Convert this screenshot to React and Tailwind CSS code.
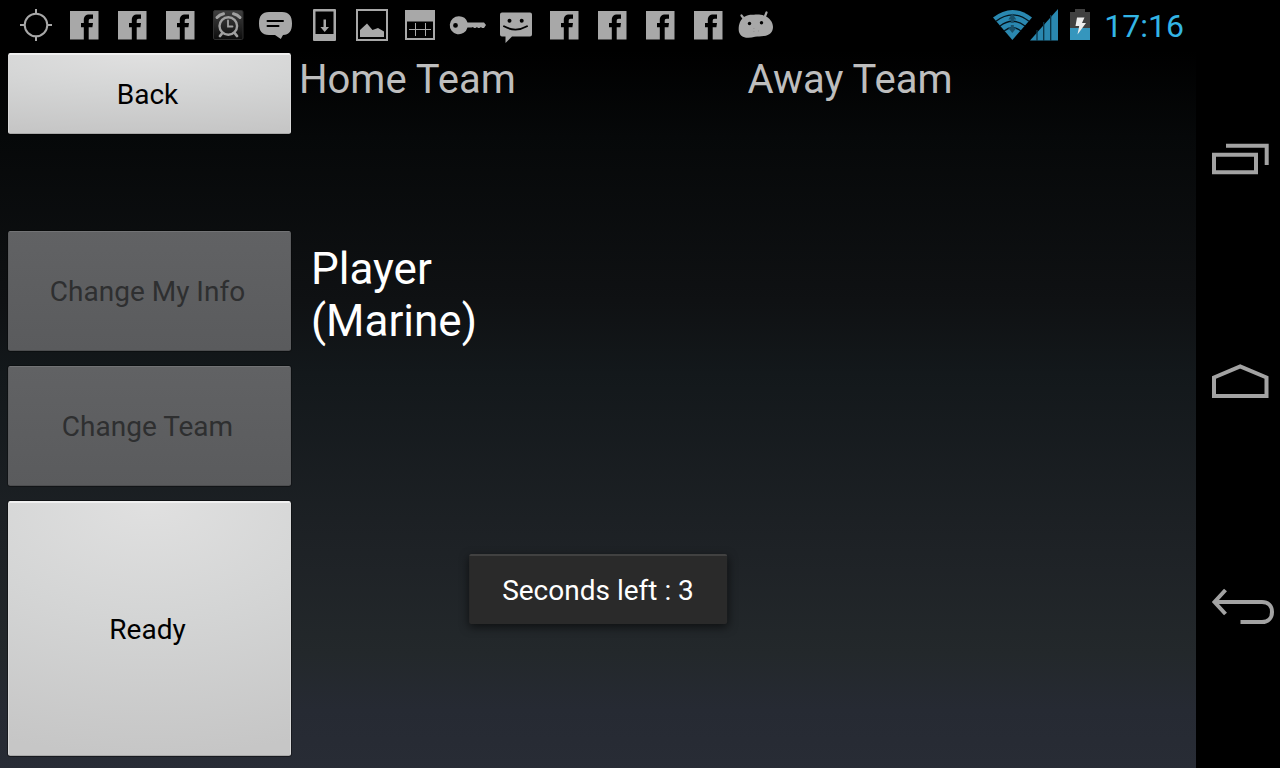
import React from 'react';

function Glyph({ label, children }) {
  return (
    <svg role="img" aria-label={label} viewBox="0 0 48 50" className="h-[50px] w-12 shrink-0" fill="#a8a8a8">
      {children}
    </svg>
  );
}

function LocationGlyph() {
  return (
    <Glyph label="Location">
      <g fill="none" stroke="#a8a8a8" strokeWidth="2">
        <circle cx="24" cy="25" r="11.3" />
        <path d="M24 9v5M24 36v5M8 25h5M35 25h5" />
      </g>
    </Glyph>
  );
}

function FacebookGlyph() {
  return (
    <Glyph label="Facebook">
      <path d="M10 11h28.5v28.5h-9.8V27.3h3.7l.6-4.3h-4.3v-2c0-1.4.6-2.2 2-2.2H33v-4.4h-3.6c-3.8 0-5.6 2-5.6 5.5V23H21v4.3h2.8v12.2H10z" />
    </Glyph>
  );
}

function AlarmGlyph() {
  return (
    <Glyph label="Alarm">
      <defs>
        <linearGradient id="alarm-tile" x1="0" y1="0" x2="0" y2="1">
          <stop offset="0" stopColor="#404040" />
          <stop offset="1" stopColor="#0c0c0c" />
        </linearGradient>
      </defs>
      <rect x="9.5" y="10.5" width="29.5" height="29" rx="1.5" fill="url(#alarm-tile)" stroke="#2e2e2e" />
      <g fill="none" stroke="#a0a0a0" strokeLinecap="round">
        <circle cx="24.3" cy="26" r="8.8" strokeWidth="2.4" />
        <path d="M24 20.500v6h4.500" strokeWidth="1.800" />
        <path d="M13 17.500q2.500-3 6.500-3.800M36 17.500q-2.500-3-6.500-3.800" strokeWidth="3" />
        <path d="M18 33.500l-2 2.500M31 33.500l2 2.500" strokeWidth="2.800" />
      </g>
    </Glyph>
  );
}

function ChatGlyph() {
  return (
    <Glyph label="Message">
      <path d="M17 12h13c7 0 10 4 10 11.500S37 34.800 31 35L28.800 39 23 35h-6c-7 0-10-4-10-11.500S10 12 17 12z" />
      <path d="M15.500 21h15.500M15.500 26h11" stroke="#000" strokeWidth="2" strokeLinecap="round" />
    </Glyph>
  );
}

function DownloadGlyph() {
  return (
    <Glyph label="Download">
      <path fillRule="evenodd" d="M14 9h21q1 0 1 1v30q0 1-1 1H14q-1 0-1-1V10q0-1 1-1zm1.500 2.500V34h18V11.500z" />
      <path d="M23.500 19.500h2.500v7.500H29l-4.300 5-4.300-5h3.100z" />
    </Glyph>
  );
}

function PictureGlyph() {
  return (
    <Glyph label="Picture">
      <path fillRule="evenodd" d="M8 9h32v32H8zm2 2v28h28V11z" />
      <path d="M12 37v-7l7-6.500 5.500 6.500 5.500-2 6 3.500V37z" />
    </Glyph>
  );
}

function CalendarGlyph() {
  return (
    <Glyph label="Calendar">
      <path fillRule="evenodd" d="M9 10h30v30H9zm2 11.500V38h26V21.500z" />
      <path d="M13 29.500h22M19.500 23v13M29.500 23v13" stroke="#a8a8a8" strokeWidth="1" />
    </Glyph>
  );
}

function KeyGlyph() {
  return (
    <Glyph label="Key">
      <path fillRule="evenodd" d="M15 16.300a9 9 0 0 1 8.500 6.200H40l2 2.500-2 3h-2l-1-1-1.500 1H34l-1-1-1.500 1H30l-1-1-1.500.500h-4A9 9 0 1 1 15 16.300zM11.500 23a2.400 2.400 0 1 0 0 4.800 2.400 2.400 0 0 0 0-4.800z" />
    </Glyph>
  );
}

function SmileyGlyph() {
  return (
    <Glyph label="Messaging">
      <path d="M10 12.500h28q2 0 2 2v20q0 2-2 2H20L13.500 43v-6.500H10q-2 0-2-2v-20q0-2 2-2z" />
      <g fill="#000">
        <circle cx="17.500" cy="20.700" r="2" />
        <circle cx="29.700" cy="20.700" r="2" />
      </g>
      <path d="M12 26.300q11.500 6.500 23 0" fill="none" stroke="#000" strokeWidth="1.800" strokeLinecap="round" />
    </Glyph>
  );
}

function AndroidGlyph() {
  return (
    <Glyph label="Android">
      <path d="M12 17c3-2 6-2.500 10-2.300 4-.200 8-.200 11 1.300 4.500 2 8 6 8 11 0 5-3.500 8.500-9 9-4 .300-6 .500-9 .700-3 1-6 1.300-9 1-4.500-.700-7.300-4-7.300-8C6.500 25 8 20 12 17z" />
      <path d="M9.500 15.500l3 4M34.500 12.500l-2 5" stroke="#a8a8a8" strokeWidth="2.200" strokeLinecap="round" />
      <g fill="#000">
        <circle cx="17.500" cy="23.500" r="1.700" />
        <circle cx="29.500" cy="22.700" r="1.700" />
      </g>
      <path d="M21.500 28.500h.8M21.500 31.500h.8M26 31h.8" stroke="#8a8a8a" strokeWidth="1" />
    </Glyph>
  );
}

function SignalGlyphs() {
  return (
    <svg role="img" aria-label="Wi-Fi and mobile signal" viewBox="992 0 68 50" className="h-[50px] w-[68px]">
      <path d="M1012.400 40L993 17.500Q1012.500 2.500 1032 17.500z" fill="#2a88b0" />
      <g fill="none" stroke="#04141c" strokeWidth="1.300">
        <path d="M996 21.300Q1012.500 8.500 1029 21.300M1000 26Q1012.500 16.500 1025 26M1004 31Q1012.500 24.500 1021 31" />
      </g>
      <path d="M1012.300 13.500l4 6h-2.500v3.500h-3v-3.500h-2.500zM1012.300 33l4.500-5.500h-3v-2.500h-3v2.500h-3z" fill="#19516a" />
      <path d="M1030 40.500L1058 9v31.500z" fill="#2a88b0" />
      <path d="M1037 30v11M1043.700 22v19M1050.700 15v26" stroke="#0b3446" strokeWidth="1.300" />
    </svg>
  );
}

function BatteryGlyph() {
  return (
    <svg role="img" aria-label="Battery charging" viewBox="1068 0 24 50" className="h-[50px] w-6">
      <path d="M1070 12h5V9h10v3h5v16h-20z" fill="#404040" />
      <path d="M1070 28h20v12h-20z" fill="#3596bd" />
      <path d="M1077 17.500h7.500l-2.500 5.500h4l-8.500 11.500 1.700-8.500h-3.700z" fill="#eee" />
    </svg>
  );
}

function StatusBar() {
  return (
    <header className="flex h-[50px] items-center justify-between bg-black px-3">
      <div className="flex">
        <LocationGlyph />
        <FacebookGlyph />
        <FacebookGlyph />
        <FacebookGlyph />
        <AlarmGlyph />
        <ChatGlyph />
        <DownloadGlyph />
        <PictureGlyph />
        <CalendarGlyph />
        <KeyGlyph />
        <SmileyGlyph />
        <FacebookGlyph />
        <FacebookGlyph />
        <FacebookGlyph />
        <FacebookGlyph />
        <AndroidGlyph />
      </div>
      <div className="flex items-center">
        <SignalGlyphs />
        <span className="w-2" />
        <BatteryGlyph />
        <time className="ml-3 pt-0.5 text-[32px] leading-[50px] text-[#33b5e5]">17:16</time>
      </div>
    </header>
  );
}

const activeButton =
  'rounded-xs border-x border-t-2 border-b border-x-[#d8d8d8] border-t-[#f0f0f0] border-b-[#a8a8a8] bg-[radial-gradient(150%_100%_at_50%_0%,#e0e0e0,#d4d5d5_45%,#c6c6c6)] pt-0.5 pr-1 text-[28px] leading-8 text-black outline outline-black/40';
const disabledButton =
  'rounded-xs border border-x-[#5a5b5d] border-t-[#727375] border-b-[#4c4d4f] bg-[linear-gradient(#616264,#5a5b5d)] pt-0.5 pr-1 text-[28px] leading-8 text-[#2e2f30] outline outline-black/30';

function NavButton({ label, viewBox, children }) {
  return (
    <button type="button" aria-label={label} className="flex flex-1 items-center justify-center">
      <svg viewBox={viewBox} className="h-[60px] w-[84px]" fill="none" stroke="#a3a3a3" strokeWidth="4">
        {children}
      </svg>
    </button>
  );
}

export default function App() {
  return (
    <div className="flex min-h-screen bg-black font-[Roboto,sans-serif]">
      <div className="relative flex min-w-0 flex-1 flex-col">
        <StatusBar />
        <main className="grid flex-1 grid-cols-[2fr_3fr_3fr] bg-[linear-gradient(#000,#060809_12%,#0f1113_35%,#13181b_45%,#1e2226_70%,#23282b_84%,#262a33_92%,#282c35)]">
          <div className="flex flex-col px-2 pt-[3px] pb-3">
            <button type="button" className={`${activeButton} mb-[97px] h-[81px]`}>Back</button>
            <div className="grid flex-1 grid-rows-[8fr_8fr_17fr] gap-[15px]">
              <button type="button" disabled className={disabledButton}>Change My Info</button>
              <button type="button" disabled className={disabledButton}>Change Team</button>
              <button type="button" className={activeButton}>Ready</button>
            </div>
          </div>
          <section className="flex flex-col">
            <h2 className="pt-[5px] text-[40px] leading-[50px] text-[#bebebe]">Home Team</h2>
            <p className="mt-[138px] ml-3 text-[44px] leading-[52px] text-white">
              Player
              <br />
              (Marine)
            </p>
          </section>
          <section>
            <h2 className="pt-[5px] text-[40px] leading-[50px] text-[#bebebe]">Away Team</h2>
          </section>
        </main>
        <div
          role="status"
          className="absolute bottom-36 left-1/2 flex h-[70px] -translate-x-1/2 items-center rounded-xs border-t-2 border-[#414141] bg-[#2a2a2a] px-[33px] pt-0.5 text-[28px] whitespace-nowrap text-white shadow-[0_3px_10px_rgba(0,0,0,0.6)]"
        >
          Seconds left : 3
        </div>
      </div>
      <nav aria-label="System" className="flex w-[84px] shrink-0 flex-col bg-black py-12">
        <NavButton label="Recent apps" viewBox="0 0 84 60">
          <path d="M18 24.800h42v17.500H18zM30 15.800h40.700V35" />
        </NavButton>
        <NavButton label="Home" viewBox="0 4 84 60">
          <path d="M18 46V27.500L44.200 16.500 70.500 27.500V46z" />
        </NavButton>
        <NavButton label="Back" viewBox="0 3 84 60">
          <path d="M18 27h48c6 0 10 4 10 10s-4 10-10 10H44.500M29.500 15L18.500 27l11 12" />
        </NavButton>
      </nav>
    </div>
  );
}
